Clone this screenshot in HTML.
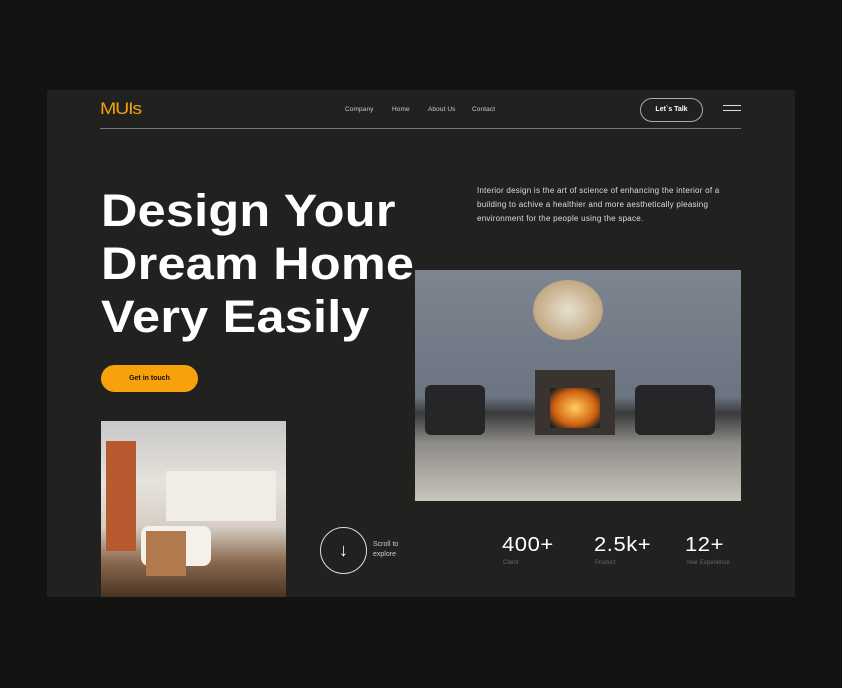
<!DOCTYPE html>
<html><head><style>
body{margin:0;width:842px;height:688px;background:#121211;font-family:"Liberation Sans",sans-serif;overflow:hidden;position:relative}
.p{position:absolute;left:47px;top:90px;width:748px;height:507px;background:#212120;overflow:hidden}
.a{position:absolute}
.nav{font-size:6.5px;color:#ccc;top:16px;letter-spacing:0.1px}
h1{position:absolute;left:54px;top:94px;margin:0;color:#fff;font-size:45px;line-height:53px;font-weight:bold;letter-spacing:0.2px;white-space:nowrap;transform:scaleX(1.12);transform-origin:0 0}
.stat{color:#fff;font-size:20px;top:444px;letter-spacing:0.5px;transform:scaleX(1.1);transform-origin:0 0}
.lab{color:#666;font-size:6px;top:470px}
</style></head><body>
<div class="p">
<div class="a" style="left:53px;top:9px;color:#f4a009;font-size:17px;letter-spacing:-1px;transform:scaleX(1.15);transform-origin:0 0">MUIs</div>
<div class="a nav" style="left:298px">Company</div>
<div class="a nav" style="left:345px">Home</div>
<div class="a nav" style="left:381px">About Us</div>
<div class="a nav" style="left:425px">Contact</div>
<div class="a" style="left:593px;top:8px;width:61px;height:22px;border:1px solid #aaa;border-radius:12px;color:#fff;font-size:7px;font-weight:bold;text-align:center;line-height:22px">Let`s Talk</div>
<div class="a" style="left:676px;top:15px;width:18px;height:1px;background:#ddd"></div>
<div class="a" style="left:676px;top:20px;width:18px;height:1px;background:#ddd"></div>
<div class="a" style="left:53px;top:38px;width:641px;height:1px;background:#777"></div>
<h1>Design Your<br>Dream Home<br>Very Easily</h1>
<div class="a" style="left:54px;top:275px;width:97px;height:27px;background:#f9a10b;border-radius:14px;font-size:7px;font-weight:bold;text-align:center;line-height:27px;color:#111">Get in touch</div>
<div class="a" style="left:430px;top:94px;width:262px;font-size:8px;letter-spacing:0.25px;line-height:14px;color:#ddd">Interior design is the art of science of enhancing the interior of a building to achive a healthier and more aesthetically pleasing environment for the people using the space.</div>
<div class="a" style="left:368px;top:180px;width:326px;height:231px;background:linear-gradient(180deg,#7c8590 0%,#6b7480 55%,#3a3a3c 62%,#8e8c88 75%,#c9c4bc 100%)">
<div class="a" style="left:120px;top:100px;width:80px;height:65px;background:#3a3430"></div>
<div class="a" style="left:135px;top:118px;width:50px;height:40px;background:radial-gradient(#ffd060,#d06010 60%,#222 90%)"></div>
<div class="a" style="left:118px;top:10px;width:70px;height:60px;border-radius:50%;background:radial-gradient(#e8e0d0,#b09060)"></div>
<div class="a" style="left:10px;top:115px;width:60px;height:50px;background:#262628;border-radius:6px"></div>
<div class="a" style="left:220px;top:115px;width:80px;height:50px;background:#262628;border-radius:6px"></div>
</div>
<div class="a" style="left:54px;top:331px;width:185px;height:176px;background:linear-gradient(180deg,#c8c8c8 0%,#e6e2dc 35%,#d6cec4 60%,#8a6a4e 80%,#4a3424 100%)">
<div class="a" style="left:5px;top:20px;width:30px;height:110px;background:#b85a30"></div>
<div class="a" style="left:65px;top:50px;width:110px;height:50px;background:#f0ece6"></div>
<div class="a" style="left:40px;top:105px;width:70px;height:40px;background:#f5f1ea;border-radius:8px"></div>
<div class="a" style="left:45px;top:110px;width:40px;height:45px;background:#b07a4e"></div>
</div>
<div class="a" style="left:273px;top:437px;width:45px;height:45px;border:1px solid #ddd;border-radius:50%;color:#fff;font-size:18px;text-align:center;line-height:45px">↓</div>
<div class="a" style="left:326px;top:450px;font-size:7px;line-height:10px;color:#ccc">Scroll to<br>explore</div>
<div class="a stat" style="left:455px">400+</div>
<div class="a stat" style="left:547px">2.5k+</div>
<div class="a stat" style="left:638px">12+</div>
<div class="a lab" style="left:456px">Client</div>
<div class="a lab" style="left:548px">Product</div>
<div class="a lab" style="left:639px">Year Experience</div>
</div>
</body></html>
